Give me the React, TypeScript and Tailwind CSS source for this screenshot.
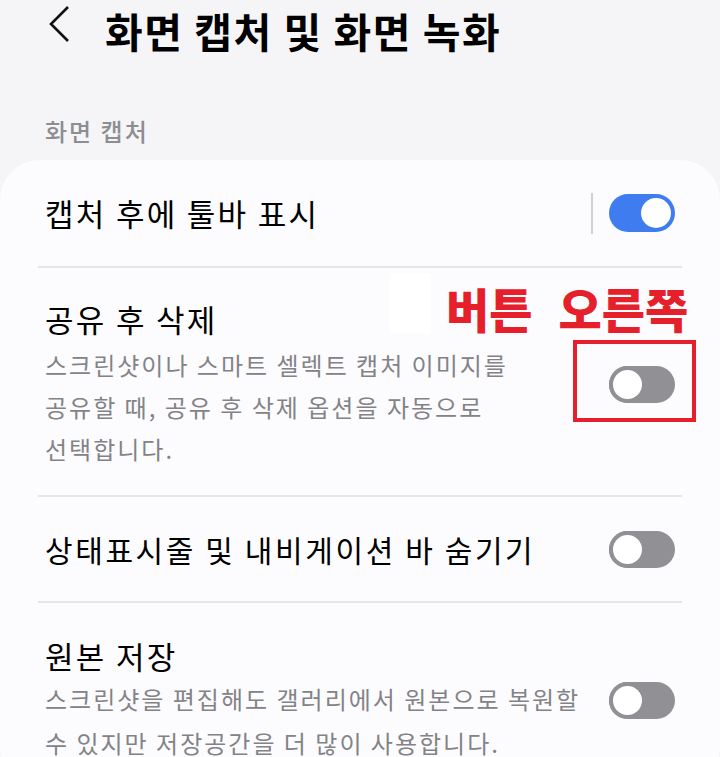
import React from 'react';

function Toggle({ on }: { on: boolean }) {
  if (on) {
    return (
      <div className="flex h-[38px] w-[66px] shrink-0 items-center justify-end rounded-full bg-[#3e7cf0] pr-[4px]">
        <div className="h-[30px] w-[30px] rounded-full bg-white" />
      </div>
    );
  }
  return (
    <div className="flex h-[37px] w-[66px] shrink-0 items-center rounded-full bg-[#909095]">
      <div className="h-[37px] w-[37px] rounded-full border-[4px] border-[#909095] bg-white" />
    </div>
  );
}

export default function App() {
  return (
    <div className="relative min-h-[757px] overflow-hidden bg-[#f5f5f7] font-['Noto_Sans_CJK_KR',sans-serif] text-black">
      {/* header */}
      <div className="flex h-[60px] items-center pl-[48px]">
        <svg width="24" height="38" viewBox="0 0 24 38" className="-mt-[12px]" fill="none" stroke="#111" strokeWidth="2.6">
          <polyline points="20,2 3,19 20,36" />
        </svg>
        <h1 className="ml-[33px] whitespace-nowrap text-[41px] font-bold leading-[60px] tracking-[1.5px]">화면 캡처 및 화면 녹화</h1>
      </div>

      <div className="pl-[45px] pt-[55px] text-[24px] font-medium leading-[32px] tracking-[2px] text-[#8d8d92]">화면 캡처</div>

      {/* card */}
      <div className="mt-[13px] rounded-[40px] bg-[#fcfcfe] px-[38px]">
        <div className="flex h-[106px] items-center px-[7px]">
          <span className="flex-1 whitespace-nowrap text-[31px] leading-[40px] tracking-[2.3px]">캡처 후에 툴바 표시</span>
          <div className="mr-[16px] h-[41px] w-[2px] bg-[#d0d0d4]" />
          <Toggle on />
        </div>
        <div className="h-[2px] bg-[#e6e6e8]" />

        <div className="flex items-center px-[7px] pb-[25px] pt-[31px]">
          <div className="flex-1">
            <div className="whitespace-nowrap text-[31px] leading-[40px] tracking-[2.3px]">공유 후 삭제</div>
            <div className="mt-[5px] whitespace-nowrap text-[24px] leading-[42px] tracking-[2px] text-[#838387]">
              스크린샷이나 스마트 셀렉트 캡처 이미지를
              <br />
              공유할 때, 공유 후 삭제 옵션을 자동으로
              <br />
              선택합니다.
            </div>
          </div>
          <Toggle on={false} />
        </div>
        <div className="h-[2px] bg-[#e6e6e8]" />

        <div className="flex h-[104px] items-center px-[7px]">
          <span className="flex-1 whitespace-nowrap text-[30px] leading-[40px] tracking-[2.6px]">상태표시줄 및 내비게이션 바 숨기기</span>
          <Toggle on={false} />
        </div>
        <div className="h-[2px] bg-[#e6e6e8]" />

        <div className="flex items-center px-[7px] pb-[23px] pt-[33px]">
          <div className="flex-1">
            <div className="whitespace-nowrap text-[31px] leading-[40px] tracking-[2.3px]">원본 저장</div>
            <div className="mt-[1px] whitespace-nowrap text-[24px] leading-[44px] tracking-[2px] text-[#838387]">
              스크린샷을 편집해도 갤러리에서 원본으로 복원할
              <br />
              수 있지만 저장공간을 더 많이 사용합니다.
            </div>
          </div>
          <Toggle on={false} />
        </div>
      </div>

      {/* annotation overlay */}
      <div className="absolute left-[390px] top-[273px] h-[61px] w-[41px] bg-white" />
      <div className="absolute left-[446px] top-[282px] flex gap-[26px] whitespace-nowrap text-[47px] font-black leading-[52px] text-[#e5202a]">
        <span>버튼</span>
        <span>오른쪽</span>
      </div>
      <div className="absolute left-[573px] top-[340px] h-[82px] w-[123px] border-[4px] border-[#e5202a]" />
    </div>
  );
}
